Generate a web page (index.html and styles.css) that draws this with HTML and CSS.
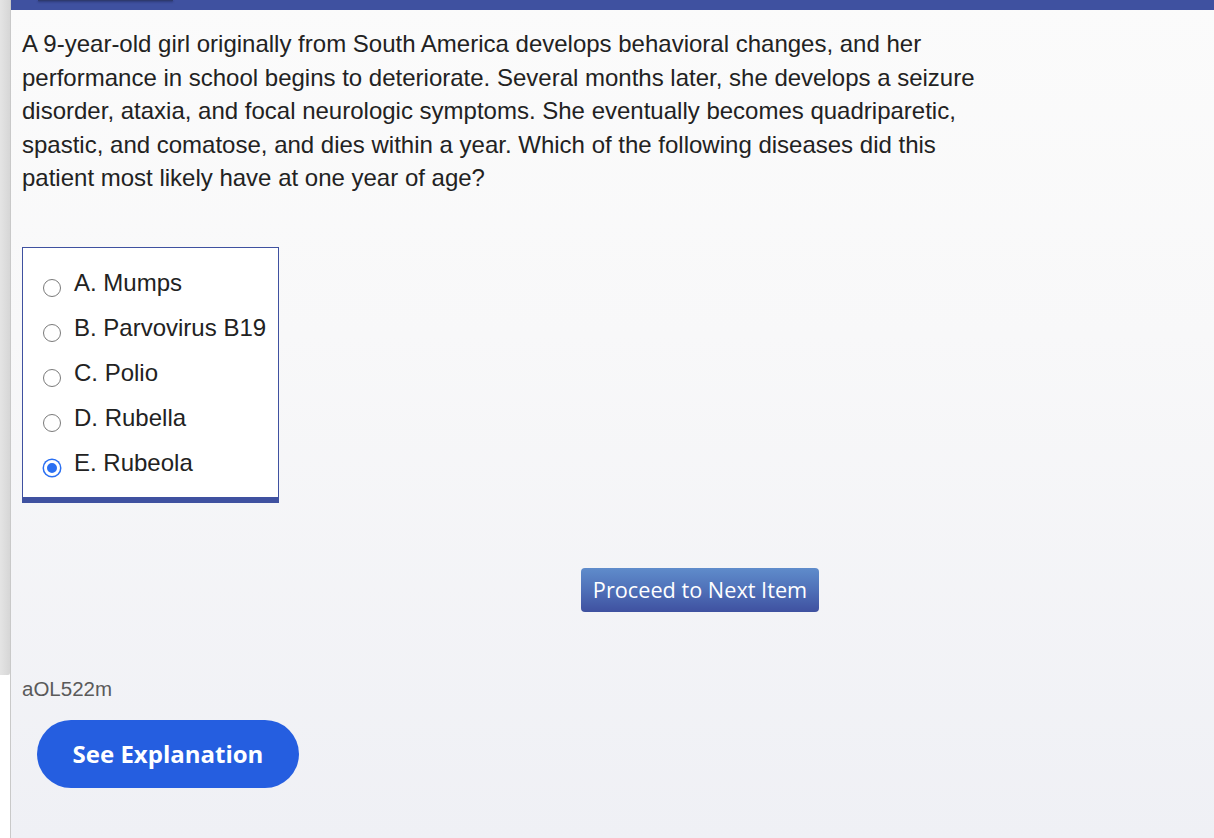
FILE: index.html
```html
<!DOCTYPE html>
<html>
<head>
<meta charset="utf-8">
<link rel="stylesheet" href="styles.css">
</head>
<body>
<div class="page">
  <div class="sidebar"><div class="thumb"></div></div>
  <div class="main">
    <div class="topbar"><div class="tab"></div></div>
    <div class="content">
      <p class="question">A 9-year-old girl originally from South America develops behavioral changes, and her performance in school begins to deteriorate. Several months later, she develops a seizure disorder, ataxia, and focal neurologic symptoms. She eventually becomes quadriparetic, spastic, and comatose, and dies within a year. Which of the following diseases did this patient most likely have at one year of age?</p>
      <div class="options">
        <label class="option"><span class="radio"></span><span class="label">A. Mumps</span></label>
        <label class="option"><span class="radio"></span><span class="label">B. Parvovirus B19</span></label>
        <label class="option"><span class="radio"></span><span class="label">C. Polio</span></label>
        <label class="option"><span class="radio"></span><span class="label">D. Rubella</span></label>
        <label class="option"><span class="radio checked"></span><span class="label">E. Rubeola</span></label>
      </div>
      <div class="proceed-row"><button class="proceed">Proceed to Next Item</button></div>
      <div class="item-id">aOL522m</div>
      <button class="explain">See Explanation</button>
    </div>
  </div>
</div>
</body>
</html>
```

FILE: styles.css
```css
html, body {
  margin: 0;
  padding: 0;
  height: 100%;
}
body {
  font-family: "Liberation Sans", Arial, sans-serif;
  color: #222;
}
.page {
  display: flex;
  height: 838px;
  overflow: hidden;
}
.sidebar {
  width: 10px;
  flex: none;
  border-right: 1px solid #c9c9c9;
  background: #fff;
}
.thumb {
  height: 675px;
  background: linear-gradient(to right, #e4e4e4, #d6d6d6);
  border-bottom-right-radius: 2px;
}
.main {
  flex: 1;
  display: flex;
  flex-direction: column;
  background: linear-gradient(to bottom, #fbfbfb 0%, #f8f8f9 40%, #eff0f5 100%);
}
.topbar {
  height: 10px;
  flex: none;
  background: #3f51a0;
}
.tab {
  margin-left: 27px;
  width: 135px;
  height: 1px;
  background: #2e3a6e;
  box-shadow: 0 1px 2px rgba(20, 25, 60, 0.6);
}
.content {
  padding: 17px 0 0 11px;
}
.question {
  margin: 0;
  width: 970px;
  font-size: 24px;
  line-height: 33.5px;
  color: #222;
}
.options {
  margin-top: 52px;
  width: 235px;
  padding: 13px 0 11px 20px;
  background: #fff;
  border: 1px solid #3f51a0;
  border-bottom: 6px solid #3f51a0;
}
.option {
  display: flex;
  align-items: center;
  height: 45px;
}
.radio {
  width: 16px;
  height: 16px;
  border: 1px solid #7a7a7a;
  border-radius: 50%;
  margin-right: 13px;
  margin-top: 9px;
  background: #fff;
  box-sizing: content-box;
  flex: none;
}
.radio.checked {
  width: 10px;
  height: 10px;
  border: 3px solid #fff;
  background: #2a6ff2;
  box-shadow: 0 0 0 1.5px #2a6ff2;
  margin-left: 1px;
  margin-right: 14px;
}
.label {
  font-size: 24px;
  color: #222;
  white-space: nowrap;
}
.proceed-row {
  margin-top: 65px;
  padding-left: 559px;
}
.proceed {
  width: 238px;
  height: 44px;
  border: none;
  border-radius: 4px;
  background: linear-gradient(to bottom, #5f8ccb 0%, #4f70b8 50%, #3f51a0 100%);
  color: #fff;
  font-family: "Open Sans", sans-serif;
  font-size: 21.7px;
  font-weight: 400;
  padding: 0;
}
.item-id {
  margin-top: 65px;
  font-size: 20.5px;
  color: #5a5a5a;
}
.explain {
  margin-top: 19px;
  margin-left: 15px;
  width: 262px;
  height: 68px;
  border: none;
  border-radius: 34px;
  background: #255ee0;
  color: #fff;
  font-family: "Open Sans", sans-serif;
  font-weight: 700;
  font-size: 24px;
  padding: 0;
}
```
